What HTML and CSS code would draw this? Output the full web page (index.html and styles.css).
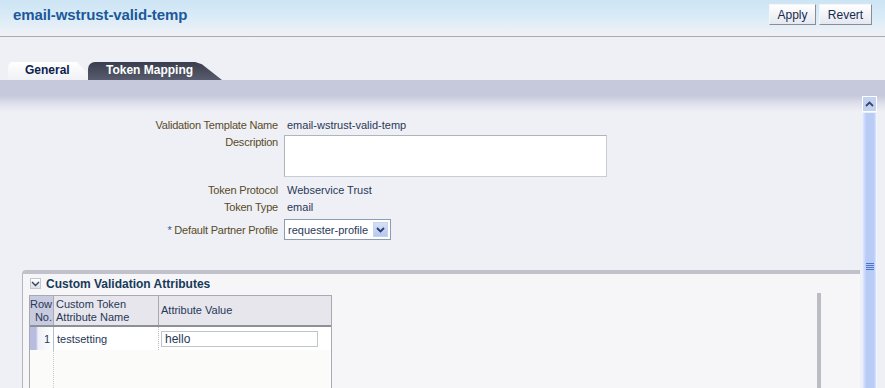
FILE: index.html
```html
<!DOCTYPE html>
<html>
<head>
<meta charset="utf-8">
<link rel="stylesheet" href="styles.css">
</head>
<body>
<div class="page">
  <div class="header">
    <h1 class="title">email-wstrust-valid-temp</h1>
    <div class="actions">
      <button class="btn btn-apply">Apply</button>
      <button class="btn btn-revert">Revert</button>
    </div>
  </div>
  <div class="tabbar">
    <div class="tab tab-active">General</div>
    <div class="tab tab-dark">Token Mapping</div>
  </div>
  <div class="band"></div>
  <div class="main">
    <div class="content">
      <div class="form">
        <div class="row row-name">
          <div class="label">Validation Template Name</div>
          <div class="value text">email-wstrust-valid-temp</div>
        </div>
        <div class="row row-desc">
          <div class="label label-top">Description</div>
          <div class="value"><div class="textarea"></div></div>
        </div>
        <div class="row row-proto">
          <div class="label">Token Protocol</div>
          <div class="value text">Webservice Trust</div>
        </div>
        <div class="row row-type">
          <div class="label">Token Type</div>
          <div class="value text">email</div>
        </div>
        <div class="row row-partner">
          <div class="label"><span class="req">*</span> Default Partner Profile</div>
          <div class="value">
            <div class="select">
              <span class="select-text">requester-profile</span>
              <span class="select-btn">
                <svg width="9" height="6" viewBox="0 0 9 6"><path d="M1 1 L4.5 4.5 L8 1" fill="none" stroke="#2c3c6c" stroke-width="1.8"/></svg>
              </span>
            </div>
          </div>
        </div>
      </div>

      <div class="section">
        <div class="section-head">
          <span class="collapse">
            <svg width="9" height="6" viewBox="0 0 9 6"><path d="M1 1 L4.5 4.5 L8 1" fill="none" stroke="#304060" stroke-width="1.4"/></svg>
          </span>
          <span class="section-title">Custom Validation Attributes</span>
        </div>
        <div class="section-body">
          <div class="table">
            <div class="thead">
              <div class="th th-no">Row<br>No.</div>
              <div class="th th-name">Custom Token<br>Attribute Name</div>
              <div class="th th-val">Attribute Value</div>
            </div>
            <div class="tr">
              <div class="td td-no">1</div>
              <div class="td td-name">testsetting</div>
              <div class="td td-val"><div class="input">hello</div></div>
            </div>
            <div class="tfill">
              <div class="fill-no"></div>
              <div class="fill-name"></div>
              <div class="fill-val"></div>
            </div>
          </div>
        </div>
      </div>
    </div>
    <div class="scrollbar">
      <div class="sb-up">
        <svg width="9" height="6" viewBox="0 0 9 6"><path d="M1 5 L4.5 1.5 L8 5" fill="none" stroke="#3a4670" stroke-width="1.8"/></svg>
      </div>
      <div class="sb-thumb">
        <div class="grip"></div>
      </div>
    </div>
  </div>
</div>
</body>
</html>
```

FILE: styles.css
```css
* { box-sizing: border-box; }
html, body {
  margin: 0;
  padding: 0;
}
body {
  width: 885px;
  height: 388px;
  overflow: hidden;
  background: #eff0f5;
  font-family: "Liberation Sans", Arial, sans-serif;
  font-size: 11px;
  color: #283858;
}
.page {
  display: flex;
  flex-direction: column;
  height: 388px;
  overflow: hidden;
}
.header {
  height: 37px;
  flex-shrink: 0;
  display: flex;
  justify-content: space-between;
  align-items: flex-start;
  padding: 0 13px;
  background: linear-gradient(#cde4f4 0, #d8ebf7 16px, #eaf0f6 30px, #eff0f5 36px);
  border-bottom: 1px solid #a8aab6;
}
.title {
  margin: 6px 0 0 0;
  font-size: 15px;
  font-weight: bold;
  color: #1c589a;
  letter-spacing: -0.1px;
}
.actions {
  display: flex;
  gap: 3px;
  margin-top: 4px;
}
.btn {
  height: 21px;
  padding: 0;
  font-family: "Liberation Sans", Arial, sans-serif;
  font-size: 12px;
  color: #1a2a4c;
  background: linear-gradient(#ffffff, #e4e8f0);
  border: 1px solid;
  border-color: #f4f6fa #8c8c94 #8c8c94 #f4f6fa;
}
.btn-apply { width: 47px; }
.btn-revert { width: 53px; }

.tabbar {
  margin-top: 25px;
  height: 18px;
  flex-shrink: 0;
  display: flex;
  padding-left: 8px;
}
.tab {
  height: 18px;
  font-size: 12px;
  font-weight: bold;
  line-height: 17px;
  white-space: nowrap;
}
.tab-active {
  width: 86px;
  padding-left: 17px;
  color: #0c1e4c;
  background: linear-gradient(#ffffff, #f0f1f6);
  border-top-left-radius: 5px;
  clip-path: polygon(0 0, 80% 0, 83% 15%, 100% 100%, 0 100%);
}
.tab-dark {
  width: 134px;
  margin-left: -6px;
  padding-left: 18px;
  color: #ffffff;
  background: linear-gradient(#3a3d4c, #585c6e);
  border-top-left-radius: 7px;
  clip-path: polygon(0 0, 80% 0, 85% 12%, 100% 100%, 0 100%);
}
.band {
  height: 16px;
  flex-shrink: 0;
  background: #c6c8dc;
}
.main {
  flex: 1;
  display: flex;
  min-height: 0;
  overflow: hidden;
  background: linear-gradient(#c8cadd 0, #dfe1ec 8px, #eff0f5 16px);
}
.content {
  width: 862px;
  display: flex;
  flex-direction: column;
  overflow: hidden;
}
.form {
  padding-top: 20px;
  display: flex;
  flex-direction: column;
  flex-shrink: 0;
}
.row {
  display: flex;
  align-items: center;
}
.label {
  width: 278px;
  text-align: right;
  color: #584a28;
  letter-spacing: -0.2px;
  white-space: nowrap;
}
.label-top { align-self: flex-start; padding-top: 1px; }
.req { color: #3a5aa0; }
.value { margin-left: 6px; }
.text { padding-left: 3px; }
.row-name { height: 17px; }
.row-desc { margin-top: 2px; height: 42px; }
.row-proto { margin-top: 5px; height: 16px; }
.row-type { margin-top: 1px; height: 16px; }
.row-partner { margin-top: 4px; height: 21px; }
.textarea {
  width: 323px;
  height: 42px;
  background: #ffffff;
  border: 1px solid #b0b4bc;
  border-right-color: #c8ccd4;
  border-bottom-color: #c8ccd4;
}
.select {
  width: 107px;
  height: 21px;
  display: flex;
  align-items: center;
  justify-content: space-between;
  background: #ffffff;
  border: 1px solid #8c9cb4;
  padding: 0 2px 0 3px;
  font-size: 11px;
  color: #283858;
  white-space: nowrap;
}
.select-btn {
  width: 15px;
  height: 15px;
  flex-shrink: 0;
  display: flex;
  align-items: center;
  justify-content: center;
  background: linear-gradient(#d4e0f8, #b4c8f0);
  border: 1px solid #c8d4ec;
}

.section {
  margin-top: 30px;
  margin-left: 22px;
  width: 838px;
  flex: 1;
  border-top: 4px solid #c0c1ca;
  border-left: 1px solid #b4b6c0;
  border-top-left-radius: 4px;
  background: #f6f6f8;
  display: flex;
  flex-direction: column;
  overflow: hidden;
}
.section-head {
  height: 19px;
  flex-shrink: 0;
  display: flex;
  align-items: center;
  padding-left: 7px;
}
.collapse {
  width: 11px;
  height: 11px;
  display: flex;
  align-items: center;
  justify-content: center;
  background: linear-gradient(#ffffff, #dcdee6);
  border: 1px solid #c4c6d0;
  margin-right: 5px;
}
.section-title {
  font-size: 12px;
  font-weight: bold;
  color: #163a58;
}
.section-body {
  flex: 1;
  width: 798px;
  padding: 2px 0 0 6px;
  border-right: 4px solid #bcbcc4;
  overflow: hidden;
}
.table {
  width: 303px;
  height: 100px;
  border: 1px solid #a8aab2;
  border-bottom: none;
  background: #fbfbf9;
  color: #283858;
  overflow: hidden;
}
.thead {
  display: flex;
  height: 31px;
  border-bottom: 2px solid #8e9098;
  background: #e6e6ec;
}
.th {
  line-height: 13px;
  padding-top: 2px;
  border-right: 1px solid #a8aab2;
  font-size: 11px;
}
.th-no {
  width: 24px;
  text-align: right;
  padding-right: 1px;
  background: #c8cadf;
}
.th-name {
  width: 105px;
  padding-left: 2px;
}
.th-val {
  flex: 1;
  border-right: none;
  padding-left: 2px;
  padding-top: 8px;
}
.tr {
  display: flex;
  height: 23px;
  align-items: stretch;
  background: #ffffff;
}
.td {
  display: flex;
  align-items: center;
  border-right: 1px dotted #b8bac2;
}
.td-no {
  width: 24px;
  justify-content: flex-end;
  padding-right: 3px;
  background: linear-gradient(90deg, #b8bce0 0, #b8bce0 6px, #eef0f6 8px, #ffffff 100%);
}
.td-name {
  width: 105px;
  padding-left: 3px;
}
.td-val {
  flex: 1;
  border-right: none;
  padding-left: 2px;
}
.input {
  width: 157px;
  height: 16px;
  line-height: 14px;
  padding-left: 3px;
  font-size: 12px;
  background: #ffffff;
  border: 1px solid #c0c4cc;
}
.tfill {
  display: flex;
  height: 50px;
}
.fill-no { width: 24px; border-right: 1px dotted #c8cad0; }
.fill-name { width: 105px; }
.fill-val { flex: 1; }

.scrollbar {
  width: 15px;
  display: flex;
  flex-direction: column;
}
.sb-up {
  height: 16px;
  flex-shrink: 0;
  display: flex;
  align-items: center;
  justify-content: center;
  background: #c4d2f2;
  border: 1px solid #ffffff;
}
.sb-thumb {
  flex: 1;
  margin-top: 1px;
  background: linear-gradient(90deg, #dfe8ff 0, #b8ccf6 3px, #b8ccf6 11px, #dfe8ff 13px, #ffffff 14px);
  border-left: 1px solid #e8eefc;
  padding-top: 150px;
  display: flex;
  justify-content: center;
}
.grip {
  width: 8px;
  height: 7px;
  background: repeating-linear-gradient(#4a74c8 0, #4a74c8 1px, transparent 1px, transparent 2px);
}
```
